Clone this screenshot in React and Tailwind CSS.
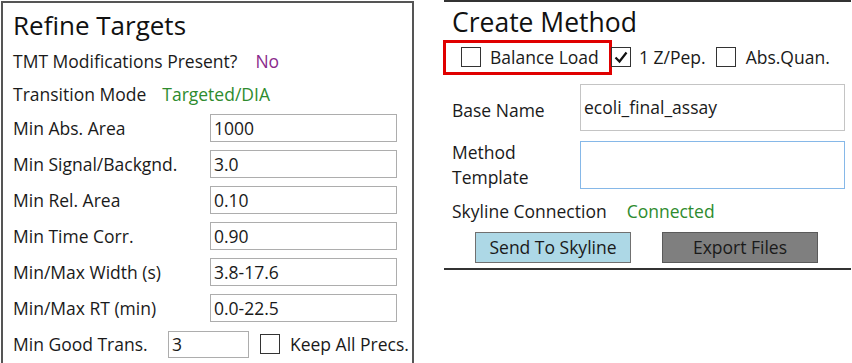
import React from "react";

const FONT = { fontFamily: '"Open Sans", "Noto Sans", sans-serif' };

function Box({ checked }) {
  return (
    <div className="w-[20px] h-[20px] border border-[#333] bg-white flex items-center justify-center shrink-0">
      {checked && (
        <svg width="16" height="16" viewBox="0 0 16 16">
          <path d="M2.5 8.5 L6.5 12.5 L13.5 3.5" fill="none" stroke="#111" strokeWidth="2.2" />
        </svg>
      )}
    </div>
  );
}

function Row({ label, value }) {
  return (
    <div className="h-[36px] flex items-center">
      <div className="w-[207px] pl-[10px] text-[17.5px] text-[#1a1a1a]">{label}</div>
      <div className="w-[187px] h-[28px] border border-[#adadad] bg-white flex items-center pl-[3px] text-[17.5px] text-[#1a1a1a]">
        {value}
      </div>
    </div>
  );
}

export default function App() {
  return (
    <div className="w-[852px] h-[363px] bg-white overflow-hidden flex items-start" style={FONT}>
      <div className="ml-[1px] mt-[1px] w-[413px] h-[400px] border-2 border-b-0 border-[#555] shrink-0">
        <div className="h-[41px] flex items-center pl-[10px] pt-[3px] text-[26px] text-[#111]">Refine Targets</div>
        <div className="h-[34px] flex items-center pl-[10px] text-[17.5px] text-[#1a1a1a]">
          <span>TMT Modifications Present?</span>
          <span className="ml-[18px] text-[#8a2a8c]">No</span>
        </div>
        <div className="h-[32px] flex items-center pl-[10px] text-[17.5px] text-[#1a1a1a]">
          <span>Transition Mode</span>
          <span className="ml-[16px] text-[#2e8b2e]">Targeted/DIA</span>
        </div>
        <Row label="Min Abs. Area" value="1000" />
        <Row label="Min Signal/Backgnd." value="3.0" />
        <Row label="Min Rel. Area" value="0.10" />
        <Row label="Min Time Corr." value="0.90" />
        <Row label="Min/Max Width (s)" value="3.8-17.6" />
        <Row label="Min/Max RT (min)" value="0.0-22.5" />
        <div className="h-[36px] flex items-center text-[17.5px] text-[#1a1a1a]">
          <div className="w-[165px] pl-[10px]">Min Good Trans.</div>
          <div className="w-[81px] h-[27px] border border-[#adadad] bg-white flex items-center pl-[3px]">3</div>
          <div className="ml-[11px]"><Box /></div>
          <span className="ml-[10px] whitespace-nowrap">Keep All Precs.</span>
        </div>
      </div>

      <div className="ml-[30px] w-[407px] h-[270px] border-t-2 border-b-2 border-[#333] shrink-0 flex flex-col">
        <div className="h-[36px] flex items-center pl-[8px] pt-[5px] text-[26.5px] text-[#111]">Create Method</div>
        <div className="h-[38px] flex items-center text-[17.5px] text-[#1a1a1a]">
          <div className="-ml-[1px] w-[169px] h-[35px] border-[3px] border-[#e00000] flex items-center pl-[15px]">
            <Box />
            <span className="ml-[9px] whitespace-nowrap">Balance Load</span>
          </div>
          <div className="-ml-[1px]"><Box checked /></div>
          <span className="ml-[8px]">1 Z/Pep.</span>
          <div className="ml-[10px]"><Box /></div>
          <span className="ml-[10px]">Abs.Quan.</span>
        </div>
        <div className="mt-[8px] flex items-center text-[17.5px] text-[#1a1a1a]">
          <div className="w-[136px] pl-[8px] pt-[5px]">Base Name</div>
          <div className="w-[265px] h-[47px] border border-[#c4c4c4] flex items-center pl-[3px]">ecoli_final_assay</div>
        </div>
        <div className="mt-[9px] flex items-center text-[17.5px] text-[#1a1a1a]">
          <div className="w-[136px] pl-[8px] leading-[25px]">Method<br />Template</div>
          <div className="w-[265px] h-[48px] border border-[#86b8e8]"></div>
        </div>
        <div className="h-[42px] flex items-center pl-[8px] text-[17.5px] text-[#1a1a1a]">
          <span>Skyline Connection</span>
          <span className="ml-[20px] text-[#2e8b2e]">Connected</span>
        </div>
        <div className="flex items-center text-[17.5px] text-[#1a1a1a]">
          <div className="ml-[31px] w-[156px] h-[31px] bg-[#add8e6] border border-[#707070] flex items-center justify-center">Send To Skyline</div>
          <div className="ml-[31px] w-[156px] h-[31px] bg-[#7f7f7f] border border-[#5a5a5a] flex items-center justify-center">Export Files</div>
        </div>
      </div>
    </div>
  );
}
